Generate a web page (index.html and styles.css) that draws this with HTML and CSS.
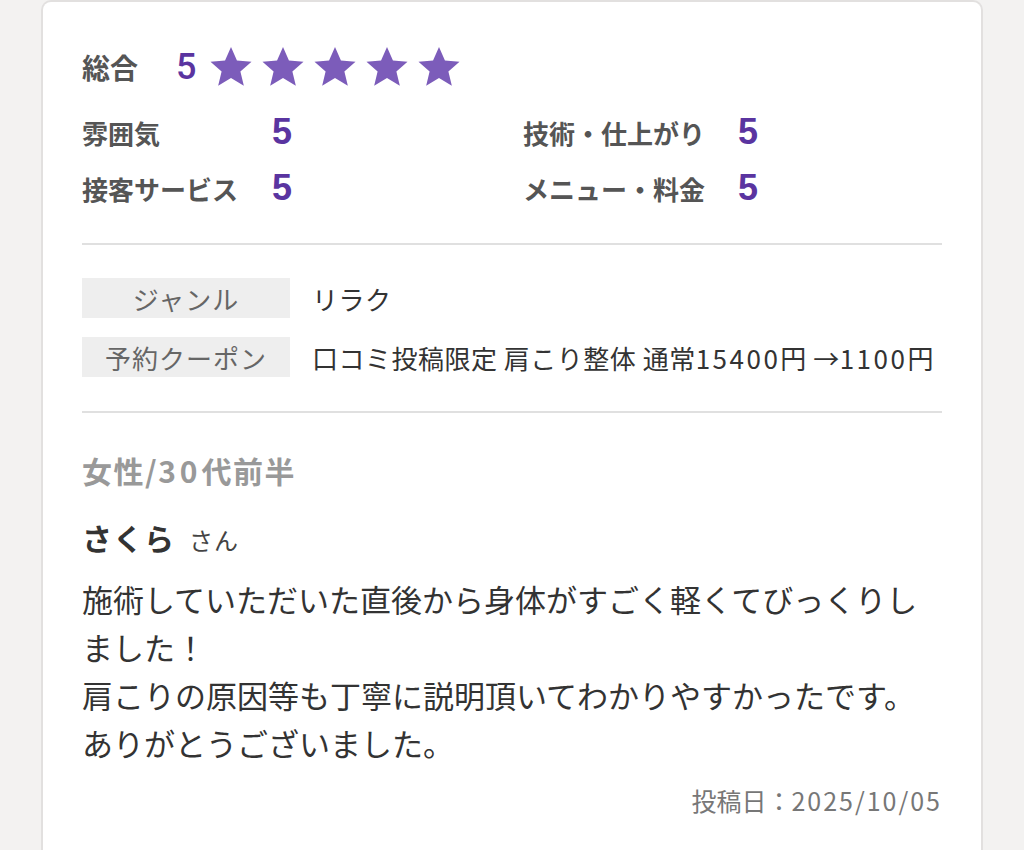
FILE: index.html
```html
<!DOCTYPE html>
<html lang="ja">
<head>
<meta charset="utf-8">
<link rel="stylesheet" href="styles.css">
</head>
<body>
<div class="card">
  <div class="overall">
    <span class="overall-label">総合</span>
    <span class="overall-score">5</span>
    <span class="stars">
      <svg class="star" viewBox="0 0 24 24"><path d="M12 1.5l3.1 7.1 7.6.7-5.8 5 1.8 7.5L12 17.8 5.3 21.8l1.8-7.5-5.8-5 7.6-.7z"/></svg>
      <svg class="star" viewBox="0 0 24 24"><path d="M12 1.5l3.1 7.1 7.6.7-5.8 5 1.8 7.5L12 17.8 5.3 21.8l1.8-7.5-5.8-5 7.6-.7z"/></svg>
      <svg class="star" viewBox="0 0 24 24"><path d="M12 1.5l3.1 7.1 7.6.7-5.8 5 1.8 7.5L12 17.8 5.3 21.8l1.8-7.5-5.8-5 7.6-.7z"/></svg>
      <svg class="star" viewBox="0 0 24 24"><path d="M12 1.5l3.1 7.1 7.6.7-5.8 5 1.8 7.5L12 17.8 5.3 21.8l1.8-7.5-5.8-5 7.6-.7z"/></svg>
      <svg class="star" viewBox="0 0 24 24"><path d="M12 1.5l3.1 7.1 7.6.7-5.8 5 1.8 7.5L12 17.8 5.3 21.8l1.8-7.5-5.8-5 7.6-.7z"/></svg>
    </span>
  </div>
  <div class="subs">
    <div class="sub"><span class="sub-label">雰囲気</span><span class="sub-score">5</span></div>
    <div class="sub sub-right"><span class="sub-label">技術・仕上がり</span><span class="sub-score">5</span></div>
    <div class="sub"><span class="sub-label">接客サービス</span><span class="sub-score">5</span></div>
    <div class="sub sub-right"><span class="sub-label">メニュー・料金</span><span class="sub-score">5</span></div>
  </div>
  <hr class="divider">
  <div class="info">
    <div class="info-row"><span class="info-label">ジャンル</span><span class="info-value">リラク</span></div>
    <div class="info-row"><span class="info-label">予約クーポン</span><span class="info-value">口コミ投稿限定 肩こり整体 通常<span class="num">15400</span>円 →<span class="num">1100</span>円</span></div>
  </div>
  <hr class="divider divider-info">
  <div class="demo">女性/<span class="demo-num">30</span>代前半</div>
  <div class="name"><span class="name-main">さくら</span><span class="name-suffix">さん</span></div>
  <p class="body">施術していただいた直後から身体がすごく軽くてびっくりしました！<br>肩こりの原因等も丁寧に説明頂いてわかりやすかったです。<br>ありがとうございました。</p>
  <div class="date">投稿日：<span class="date-num">2025/10/05</span></div>
</div>
</body>
</html>
```
FILE: styles.css
```css
html, body {
  margin: 0;
  padding: 0;
}
body {
  background: #f3f2f1;
  font-family: "Noto Sans CJK JP", "Noto Sans", sans-serif;
  color: #333;
  height: 850px;
  overflow: hidden;
}
.card {
  margin-left: 41px;
  width: 860px;
  min-height: 806px;
  background: #fff;
  border: 2px solid #e2e0df;
  border-bottom: 0;
  border-radius: 10px 10px 0 0;
  padding: 42px 39px 0 39px;
}
.overall {
  display: flex;
  align-items: center;
  height: 46px;
}
.overall-label {
  font-size: 28px;
  font-weight: 700;
  color: #555;
  width: 94px;
}
.overall-score {
  font-family: Roboto, "Liberation Sans", sans-serif;
  font-weight: 500;
  font-size: 36px;
  color: #5a34a0;
  margin-right: 12px;
}
.stars {
  display: flex;
  gap: 6px;
}
.star {
  width: 46px;
  height: 46px;
  fill: #7c5cba;
}
.subs {
  display: grid;
  grid-template-columns: 441px 1fr;
  margin-top: 14px;
}
.sub {
  display: flex;
  align-items: center;
  height: 56px;
}
.sub-label {
  font-size: 26px;
  font-weight: 700;
  color: #555;
  width: 190px;
}
.sub-right .sub-label {
  width: 215px;
}
.sub-score {
  font-family: "Liberation Sans", sans-serif;
  font-weight: 700;
  font-size: 36px;
  color: #5a34a0;
}
.divider {
  border: 0;
  border-top: 2px solid #e0e0e0;
  margin: 27px 0 0 0;
}
.info {
  display: flex;
  flex-direction: column;
  gap: 19px;
  margin-top: 33px;
}
.info-row {
  display: flex;
  align-items: center;
  gap: 22px;
}
.info-label {
  width: 208px;
  height: 40px;
  background: #eeeeee;
  color: #666;
  font-size: 26px;
  letter-spacing: 1px;
  display: flex;
  align-items: center;
  justify-content: center;
}
.info-value {
  font-size: 26px;
  color: #333;
  letter-spacing: 0.5px;
}
.num {
  letter-spacing: 2.5px;
}
.divider-info {
  margin-top: 34px;
}
.demo {
  margin-top: 37px;
  font-size: 30px;
  font-weight: 700;
  color: #999;
  line-height: 40px;
  letter-spacing: 1.5px;
}
.demo-num {
  letter-spacing: 4px;
}
.name {
  margin-top: 27px;
  line-height: 40px;
  display: flex;
  align-items: baseline;
  gap: 14px;
}
.name-main {
  font-size: 30px;
  font-weight: 700;
  color: #333;
  letter-spacing: 1px;
}
.name-suffix {
  font-size: 24px;
  color: #444;
  letter-spacing: 1px;
}
.body {
  margin: 15px 0 0 0;
  font-size: 31px;
  line-height: 48px;
  color: #333;
}
.date {
  margin-top: 15px;
  text-align: right;
  font-size: 25px;
  line-height: 36px;
  color: #777;
}
.date-num {
  letter-spacing: 2px;
}
```
